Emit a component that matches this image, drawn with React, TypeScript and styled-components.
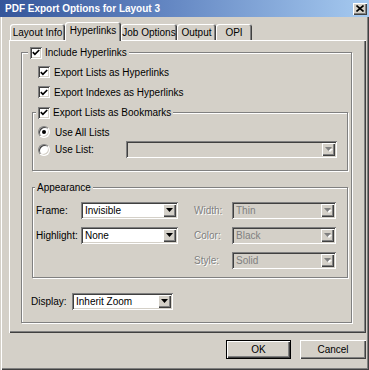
import React from "react";
import styled, { createGlobalStyle } from "styled-components";

const face = "#d4d0c8";
const shade = "#808080";
const dark = "#404040";

const GlobalStyle = createGlobalStyle`
  html, body {
    margin: 0;
    padding: 0;
    background: ${face};
  }
  body {
    font-family: "Liberation Sans", Arial, sans-serif;
    font-size: 10px;
    color: #000;
  }
  * {
    box-sizing: border-box;
  }
`;

const Window = styled.div`
  width: 369px;
  height: 370px;
  display: flex;
  flex-direction: column;
  background: ${face};
  overflow: hidden;
`;

const TitleBar = styled.div`
  height: 17px;
  flex-shrink: 0;
  display: flex;
  align-items: center;
  justify-content: space-between;
  padding: 0 2px 0 5px;
  background: linear-gradient(to right, #34559a 0%, #6386c2 45%, #a6caf0 100%);
  color: #fff;
  font-weight: bold;
  font-size: 10px;
  white-space: nowrap;
`;

const CloseBtn = styled.div`
  width: 14px;
  height: 12px;
  display: flex;
  align-items: center;
  justify-content: center;
  background: ${face};
  box-shadow: inset 1px 1px #fff, inset -1px -1px ${dark}, inset -2px -2px ${shade};
`;

const Body = styled.div`
  flex: 1;
  display: flex;
  flex-direction: column;
  padding: 5px 3px 0 9px;
  box-shadow: inset 1px 0 ${face}, inset 2px 0 #fff, inset -1px -1px ${dark},
    inset -2px -2px ${shade};
`;

const TabStrip = styled.div`
  display: flex;
  align-items: flex-end;
  height: 18px;
  padding-left: 1px;
  position: relative;
  z-index: 1;
`;

const Tab = styled.div<{ $w: number; $active?: boolean }>`
  width: ${(p) => p.$w}px;
  height: ${(p) => (p.$active ? 19 : 16)}px;
  margin-bottom: ${(p) => (p.$active ? -1 : 0)}px;
  padding-bottom: ${(p) => (p.$active ? 2 : 0)}px;
  display: flex;
  align-items: center;
  justify-content: center;
  background: ${face};
  border-radius: 3px 3px 0 0;
  box-shadow: inset 1px 1px #fff, inset -1px 0 ${dark}, inset -2px 0 ${shade};
  white-space: nowrap;
`;

const Panel = styled.div`
  height: 293px;
  display: flex;
  flex-direction: column;
  padding: 12px 14px 10px 12px;
  box-shadow: inset 1px 1px #fff, inset -1px -1px ${dark}, inset -2px -2px ${shade};
`;

const Group = styled.div<{ $mt?: number; $ml?: number; $grow?: boolean }>`
  position: relative;
  margin-top: ${(p) => p.$mt ?? 0}px;
  margin-left: ${(p) => p.$ml ?? 0}px;
  flex: ${(p) => (p.$grow ? 1 : "none")};
  border: 1px solid ${shade};
  box-shadow: inset 1px 1px #fff, 1px 1px #fff;
`;

const Legend = styled.div<{ $left: number }>`
  position: absolute;
  top: -7px;
  left: ${(p) => p.$left}px;
  height: 13px;
  display: flex;
  align-items: center;
  gap: 3px;
  padding: 0 2px;
  background: ${face};
  white-space: nowrap;
`;

const IncludeBody = styled.div`
  display: flex;
  flex-direction: column;
  padding: 13px 3px 0 9px;
`;

const BookmarkBody = styled.div`
  display: flex;
  flex-direction: column;
  padding: 13px 10px 12px 5px;
`;

const CheckRow = styled.label<{ $mt?: number }>`
  display: flex;
  align-items: center;
  gap: 4px;
  height: 12px;
  margin-left: 7px;
  margin-top: ${(p) => p.$mt ?? 0}px;
  white-space: nowrap;
`;

const RadioRow = styled.label<{ $mt?: number; $h?: number }>`
  display: flex;
  align-items: center;
  height: ${(p) => p.$h ?? 12}px;
  margin-top: ${(p) => p.$mt ?? 0}px;
  white-space: nowrap;
`;

const RadioLabel = styled.span<{ $w?: number }>`
  margin-left: 5px;
  width: ${(p) => (p.$w ? `${p.$w}px` : "auto")};
`;

const Box = styled.span`
  width: 12px;
  height: 12px;
  flex: none;
  display: flex;
  align-items: center;
  justify-content: center;
  background: #fff;
  box-shadow: inset 1px 1px ${shade}, inset -1px -1px #fff, inset 2px 2px ${dark},
    inset -2px -2px ${face};
`;

const Radio = styled.span<{ $on?: boolean }>`
  width: 12px;
  height: 12px;
  flex: none;
  border-radius: 50%;
  display: flex;
  align-items: center;
  justify-content: center;
  background: #fff;
  border: 1px solid;
  border-color: ${shade} #fff #fff ${shade};
  box-shadow: inset 1px 1px ${dark}, inset -1px -1px ${face};

  &::after {
    content: "";
    width: 4px;
    height: 4px;
    border-radius: 50%;
    background: #000;
    display: ${(p) => (p.$on ? "block" : "none")};
  }
`;

const AppearanceGrid = styled.div`
  display: grid;
  grid-template-columns: 45px 97px 16px 38px 104px;
  grid-template-rows: 17px 17px 17px;
  row-gap: 8px;
  align-items: center;
  padding: 14px 0 8px 3px;
`;

const FieldLabel = styled.span<{ $disabled?: boolean; $w?: number }>`
  width: ${(p) => (p.$w ? `${p.$w}px` : "auto")};
  flex: none;
  color: ${(p) => (p.$disabled ? shade : "#000")};
  text-shadow: ${(p) => (p.$disabled ? "1px 1px #fff" : "none")};
  white-space: nowrap;
`;

const SelectBox = styled.div<{ $w?: number; $disabled?: boolean }>`
  width: ${(p) => (p.$w ? `${p.$w}px` : "auto")};
  flex: ${(p) => (p.$w ? "none" : 1)};
  height: 17px;
  display: flex;
  padding: 2px;
  background: ${(p) => (p.$disabled ? face : "#fff")};
  box-shadow: inset 1px 1px ${shade}, inset -1px -1px #fff, inset 2px 2px ${dark},
    inset -2px -2px ${face};
`;

const SelectValue = styled.span<{ $disabled?: boolean }>`
  flex: 1;
  padding-left: 2px;
  line-height: 13px;
  color: ${(p) => (p.$disabled ? shade : "#000")};
  white-space: nowrap;
  overflow: hidden;
`;

const ArrowBtn = styled.span`
  width: 13px;
  height: 13px;
  display: flex;
  align-items: center;
  justify-content: center;
  background: ${face};
  box-shadow: inset 1px 1px #fff, inset -1px -1px ${dark}, inset -2px -2px ${shade};
`;

const DisplayRow = styled.div`
  display: flex;
  align-items: center;
  margin-top: 15px;
`;

const ButtonRow = styled.div`
  display: flex;
  justify-content: flex-end;
  gap: 9px;
  margin-top: 7px;
`;

const Button = styled.div<{ $w: number; $default?: boolean }>`
  width: ${(p) => p.$w}px;
  height: 19px;
  display: flex;
  align-items: center;
  justify-content: center;
  background: ${face};
  border: ${(p) => (p.$default ? "1px solid #000" : "none")};
  box-shadow: inset 1px 1px #fff, inset -1px -1px ${dark}, inset -2px -2px ${shade};
`;

function Arrow({ disabled }: { disabled?: boolean }) {
  return (
    <svg width="8" height="5" viewBox="0 0 8 5">
      {disabled && <path d="M2 2h6L5 5z" fill="#fff" />}
      <path d="M0 0h7L3.5 4z" fill={disabled ? shade : "#000"} />
    </svg>
  );
}

function Select({
  value,
  width,
  disabled,
}: {
  value: string;
  width?: number;
  disabled?: boolean;
}) {
  return (
    <SelectBox $w={width} $disabled={disabled}>
      <SelectValue $disabled={disabled}>{value}</SelectValue>
      <ArrowBtn>
        <Arrow disabled={disabled} />
      </ArrowBtn>
    </SelectBox>
  );
}

function Check() {
  return (
    <Box>
      <svg width="8" height="7" viewBox="0 0 8 7">
        <path d="M0.8 3.2 L2.9 5.3 L7.2 1" stroke="#000" strokeWidth="1.7" fill="none" />
      </svg>
    </Box>
  );
}

const tabs = [
  { label: "Layout Info", w: 55 },
  { label: "Hyperlinks", w: 56, active: true },
  { label: "Job Options", w: 56 },
  { label: "Output", w: 39 },
  { label: "OPI", w: 36 },
];

export default function App() {
  return (
    <>
      <GlobalStyle />
      <Window>
        <TitleBar>
          <span>PDF Export Options for Layout 3</span>
          <CloseBtn>
            <svg width="8" height="7" viewBox="0 0 8 7">
              <path d="M0.5 0.5 L7.5 6.5 M7.5 0.5 L0.5 6.5" stroke="#000" strokeWidth="1.6" />
            </svg>
          </CloseBtn>
        </TitleBar>
        <Body>
          <TabStrip>
            {tabs.map((t) => (
              <Tab key={t.label} $w={t.w} $active={t.active}>
                {t.label}
              </Tab>
            ))}
          </TabStrip>
          <Panel>
            <Group $grow>
              <Legend $left={6}>
                <Check />
                <span>Include Hyperlinks</span>
              </Legend>
              <IncludeBody>
                <CheckRow>
                  <Check />
                  <span>Export Lists as Hyperlinks</span>
                </CheckRow>
                <CheckRow $mt={8}>
                  <Check />
                  <span>Export Indexes as Hyperlinks</span>
                </CheckRow>

                <Group $mt={14} $ml={1}>
                  <Legend $left={3}>
                    <Check />
                    <span>Export Lists as Bookmarks</span>
                  </Legend>
                  <BookmarkBody>
                    <RadioRow>
                      <Radio $on />
                      <RadioLabel>Use All Lists</RadioLabel>
                    </RadioRow>
                    <RadioRow $mt={3} $h={17}>
                      <Radio />
                      <RadioLabel $w={71}>Use List:</RadioLabel>
                      <Select value="" disabled />
                    </RadioRow>
                  </BookmarkBody>
                </Group>

                <Group $mt={16} $ml={1}>
                  <Legend $left={2}>
                    <span>Appearance</span>
                  </Legend>
                  <AppearanceGrid>
                    <FieldLabel>Frame:</FieldLabel>
                    <Select value="Invisible" width={97} />
                    <span />
                    <FieldLabel $disabled>Width:</FieldLabel>
                    <Select value="Thin" width={104} disabled />

                    <FieldLabel>Highlight:</FieldLabel>
                    <Select value="None" width={97} />
                    <span />
                    <FieldLabel $disabled>Color:</FieldLabel>
                    <Select value="Black" width={104} disabled />

                    <span />
                    <span />
                    <span />
                    <FieldLabel $disabled>Style:</FieldLabel>
                    <Select value="Solid" width={104} disabled />
                  </AppearanceGrid>
                </Group>

                <DisplayRow>
                  <FieldLabel $w={41}>Display:</FieldLabel>
                  <Select value="Inherit Zoom" width={101} />
                </DisplayRow>
              </IncludeBody>
            </Group>
          </Panel>
          <ButtonRow>
            <Button $w={65} $default>
              OK
            </Button>
            <Button $w={66}>Cancel</Button>
          </ButtonRow>
        </Body>
      </Window>
    </>
  );
}
